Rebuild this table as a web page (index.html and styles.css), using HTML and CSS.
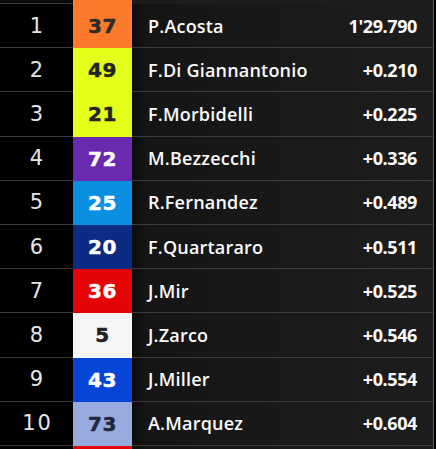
FILE: index.html
```html
<!DOCTYPE html>
<html>
<head>
<meta charset="utf-8">
<link rel="stylesheet" href="styles.css">
</head>
<body>
<div class="board">
  <div class="top"><div class="pos"></div><div class="num c-orange"></div><div class="name"></div></div>
  <div class="row"><div class="pos">1</div><div class="num c-orange">37</div><div class="name"><span>P.Acosta</span><span class="time">1'29.790</span></div></div>
  <div class="row"><div class="pos">2</div><div class="num c-yellow">49</div><div class="name"><span>F.Di Giannantonio</span><span class="time">+0.210</span></div></div>
  <div class="row"><div class="pos">3</div><div class="num c-yellow">21</div><div class="name"><span>F.Morbidelli</span><span class="time">+0.225</span></div></div>
  <div class="row"><div class="pos">4</div><div class="num c-purple">72</div><div class="name"><span>M.Bezzecchi</span><span class="time">+0.336</span></div></div>
  <div class="row"><div class="pos">5</div><div class="num c-sky">25</div><div class="name"><span>R.Fernandez</span><span class="time">+0.489</span></div></div>
  <div class="row"><div class="pos">6</div><div class="num c-navy">20</div><div class="name"><span>F.Quartararo</span><span class="time">+0.511</span></div></div>
  <div class="row"><div class="pos">7</div><div class="num c-red">36</div><div class="name"><span>J.Mir</span><span class="time">+0.525</span></div></div>
  <div class="row"><div class="pos">8</div><div class="num c-white">5</div><div class="name"><span>J.Zarco</span><span class="time">+0.546</span></div></div>
  <div class="row"><div class="pos">9</div><div class="num c-blue">43</div><div class="name"><span>J.Miller</span><span class="time">+0.554</span></div></div>
  <div class="row"><div class="pos">10</div><div class="num c-lilac">73</div><div class="name"><span>A.Marquez</span><span class="time">+0.604</span></div></div>
  <div class="row"><div class="pos"></div><div class="num c-red"></div><div class="name"></div></div>
</div>
</body>
</html>
```

FILE: styles.css
```css
html, body {
  margin: 0;
  padding: 0;
  background: #000;
  width: 436px;
  height: 449px;
  overflow: hidden;
}
.board {
  width: 433px;
  border-right: 1px solid #5a5a5a;
  display: flex;
  flex-direction: column;
}
.top, .row {
  display: grid;
  grid-template-columns: 73px 59px 1fr;
}
.top { height: 4px; }
.top .name { background: #1c1c1c; border: none; }
.top .pos { background: #0a0a0a; }
.row { height: 44.2px; }
.pos {
  background: #000;
  border-bottom: 1px solid #3a3a3a;
  color: #e6e6e6;
  font-family: "DejaVu Sans", sans-serif;
  font-weight: 400;
  font-size: 21px;
  letter-spacing: 2px;
  padding-left: 2px;
  display: flex;
  align-items: center;
  justify-content: center;
}
.num {
  display: flex;
  align-items: center;
  justify-content: center;
  font-family: "DejaVu Sans", sans-serif;
  font-weight: 700;
  font-size: 20px;
  letter-spacing: 0.5px;
  -webkit-text-stroke: 0.5px currentColor;
  color: #fff;
}
.name {
  background: linear-gradient(90deg, #0c0c0c 0px, #151515 14px, #1a1a1a 60%, #1d1d1d 100%);
  border-bottom: 1px solid #3c3c3c;
  display: flex;
  align-items: center;
  justify-content: space-between;
  padding: 0 16px 0 16px;
  color: #fafafa;
  font-family: "Open Sans", sans-serif;
  font-weight: 600;
  font-size: 18px;
  letter-spacing: 0.2px;
}
.time {
  font-weight: 700;
  font-size: 18px;
  letter-spacing: -0.4px;
}
.c-orange { background: #fd7a2c; color: #2b2b2b; }
.c-yellow { background: #e3ff1c; color: #232323; }
.c-purple { background: #6a2ab0; }
.c-sky { background: #0b8fe0; }
.c-navy { background: #0b2c82; }
.c-red { background: #e20406; }
.c-white { background: #f6f6f6; color: #222; }
.c-blue { background: #0645d6; }
.c-lilac { background: #98abdf; color: #23263a; }
```
